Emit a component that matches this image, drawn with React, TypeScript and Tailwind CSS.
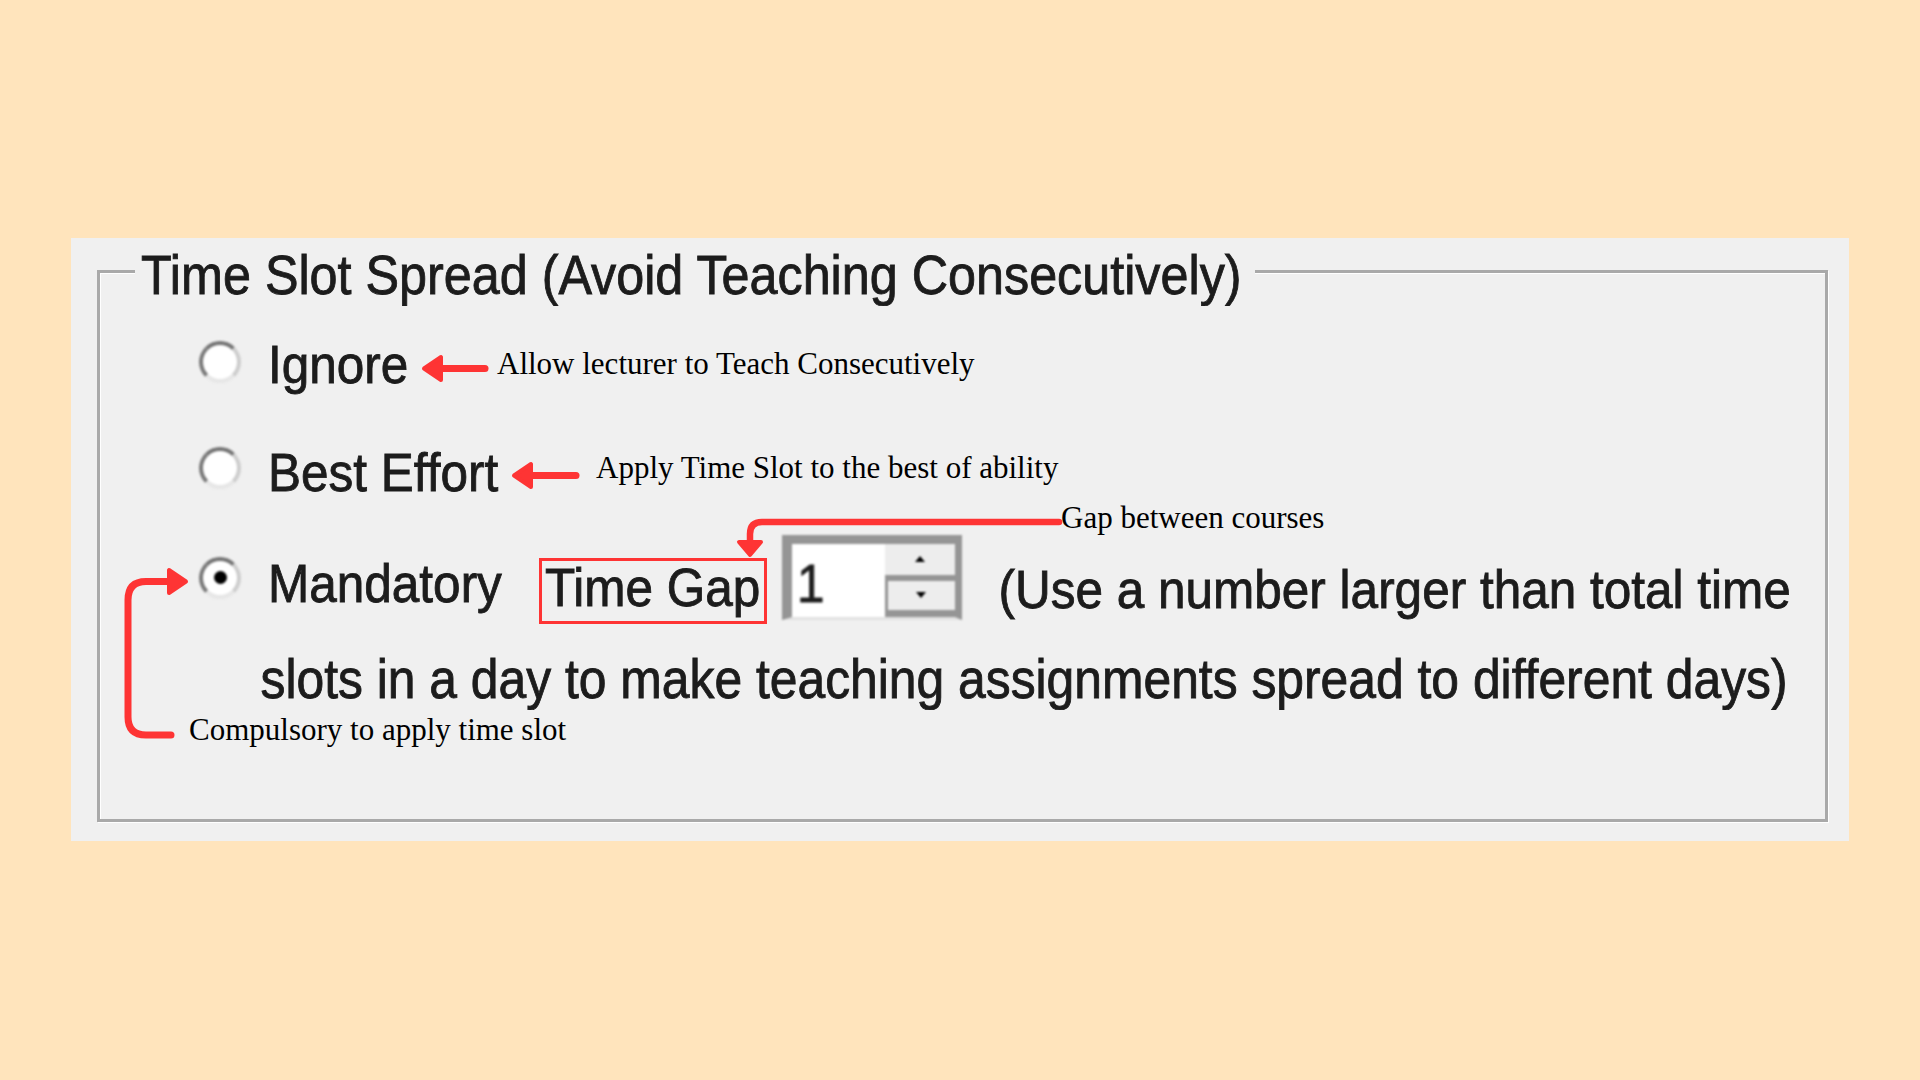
import React from "react";

// Dialog text: scaled-up Windows label look
function UiText({ children, className = "" }: { children: React.ReactNode; className?: string }) {
  return (
    <span
      className={`inline-block shrink-0 whitespace-nowrap font-['Liberation_Sans',Arial,sans-serif] text-[49.5px] leading-none text-[#1c1c1c] scale-y-110 blur-[0.5px] [-webkit-text-stroke:0.8px_#1c1c1c] ${className}`}
    >
      {children}
    </span>
  );
}

function Radio({ checked = false, className = "" }: { checked?: boolean; className?: string }) {
  return (
    <span
      className={`flex h-[42px] w-[42px] shrink-0 items-center justify-center rounded-full border-[4px] border-t-[#747474] border-l-[#7a7a7a] border-r-[#cdcdcd] border-b-[#e6e6e6] bg-white blur-[0.8px] ${className}`}
    >
      {checked && <span className="h-[13px] w-[13px] rounded-full bg-black" />}
    </span>
  );
}

function Spinner({ className = "" }: { className?: string }) {
  return (
    <div
      className={`flex h-[85px] w-[180px] shrink-0 border-t-[9px] border-l-[10px] border-r-[7px] border-b-[3px] border-t-[#959595] border-l-[#959595] border-r-[#959595] border-b-[#e2e2e2] blur-[0.8px] ${className}`}
    >
      <div className="flex w-[93px] bg-white pl-[5px] pt-[15px]">
        <UiText>1</UiText>
      </div>
      <div className="flex w-[70px] flex-col bg-[#959595]">
        <div className="flex h-[31px] items-center justify-center bg-[#ededed]">
          <span className="h-0 w-0 border-x-[5px] border-b-[6px] border-x-transparent border-b-black" />
        </div>
        <div className="ml-[3px] mt-[6px] flex h-[29px] items-center justify-center bg-[#ededed]">
          <span className="h-0 w-0 border-x-[5px] border-t-[6px] border-x-transparent border-t-black" />
        </div>
      </div>
    </div>
  );
}

function Note({ children, className = "" }: { children: React.ReactNode; className?: string }) {
  return (
    <span
      className={`absolute whitespace-nowrap font-['Liberation_Serif','Times_New_Roman',serif] text-[31px] leading-none text-black ${className}`}
    >
      {children}
    </span>
  );
}

export default function App() {
  return (
    <div className="relative h-screen w-full overflow-hidden bg-[#ffe4bc] pl-[71px] pt-[238px]">
      <div className="h-[603px] w-[1778px] bg-[#f0f0f0] pl-[26px] pt-[32px]">
        <div className="relative h-[552px] w-[1731px] border-[3px] border-[#a9a9a9] shadow-[inset_1px_1px_0_#ffffff,1px_1px_0_#ffffff]">
          <div className="absolute left-[35px] top-[-23.3px] flex bg-[#f0f0f0] pl-[6px] pr-[13px]">
            <UiText className="text-[50.3px]">Time Slot Spread (Avoid Teaching Consecutively)</UiText>
          </div>

          <div className="flex flex-col pl-[99px]">
            <div className="mt-[66.4px] flex items-start">
              <Radio className="mt-[1.6px]" />
              <UiText className="ml-[27px]">Ignore</UiText>
            </div>

            <div className="mt-[58.5px] flex items-start">
              <Radio />
              <UiText className="ml-[27px]">Best Effort</UiText>
            </div>

            <div className="mt-[38px] flex h-[89px] items-start">
              <Radio checked className="mt-[22px]" />
              <UiText className="ml-[27px] mt-[23.4px]">Mandatory</UiText>
              <div className="ml-[37px] mt-[23px] flex h-[66px] w-[228px] shrink-0 border-[3px] border-[#fe3434] pl-[3px] pt-[2.4px]">
                <UiText>Time Gap</UiText>
              </div>
              <Spinner className="ml-[15px]" />
              <UiText className="ml-[36.6px] mt-[29.4px]">(Use a number larger than total time</UiText>
            </div>

            <div className="mt-[31.4px] flex pl-[61.5px]">
              <UiText className="text-[49.8px]">slots in a day to make teaching assignments spread to different days)</UiText>
            </div>
          </div>
        </div>
      </div>

      {/* callouts */}
      <svg className="pointer-events-none absolute left-0 top-0" width="1920" height="1080" viewBox="0 0 1920 1080">
        <g fill="#fe3434" stroke="#fe3434" strokeLinejoin="round" strokeLinecap="round">
          <line x1="440" y1="368.5" x2="485" y2="368.5" strokeWidth="7" />
          <polygon points="424,368.5 441,357 441,380" strokeWidth="4" />

          <line x1="530" y1="475.5" x2="576" y2="475.5" strokeWidth="7" />
          <polygon points="514,475.5 531,464 531,487" strokeWidth="4" />

          <path d="M1059 522 H762 Q750 522 750 534 V544" fill="none" strokeWidth="6.5" />
          <polygon points="750,555 739,542 761,542" strokeWidth="4" />

          <path d="M171 735 H146 Q128 735 128 717 V600 Q128 581.5 146 581.5 H170" fill="none" strokeWidth="7" />
          <polygon points="186,581.5 169,570 169,593" strokeWidth="4" />
        </g>
      </svg>

      <Note className="left-[497px] top-[348px]">Allow lecturer to Teach Consecutively</Note>
      <Note className="left-[596px] top-[452px]">Apply Time Slot to the best of ability</Note>
      <Note className="left-[1061px] top-[502px]">Gap between courses</Note>
      <Note className="left-[189px] top-[714px]">Compulsory to apply time slot</Note>
    </div>
  );
}
